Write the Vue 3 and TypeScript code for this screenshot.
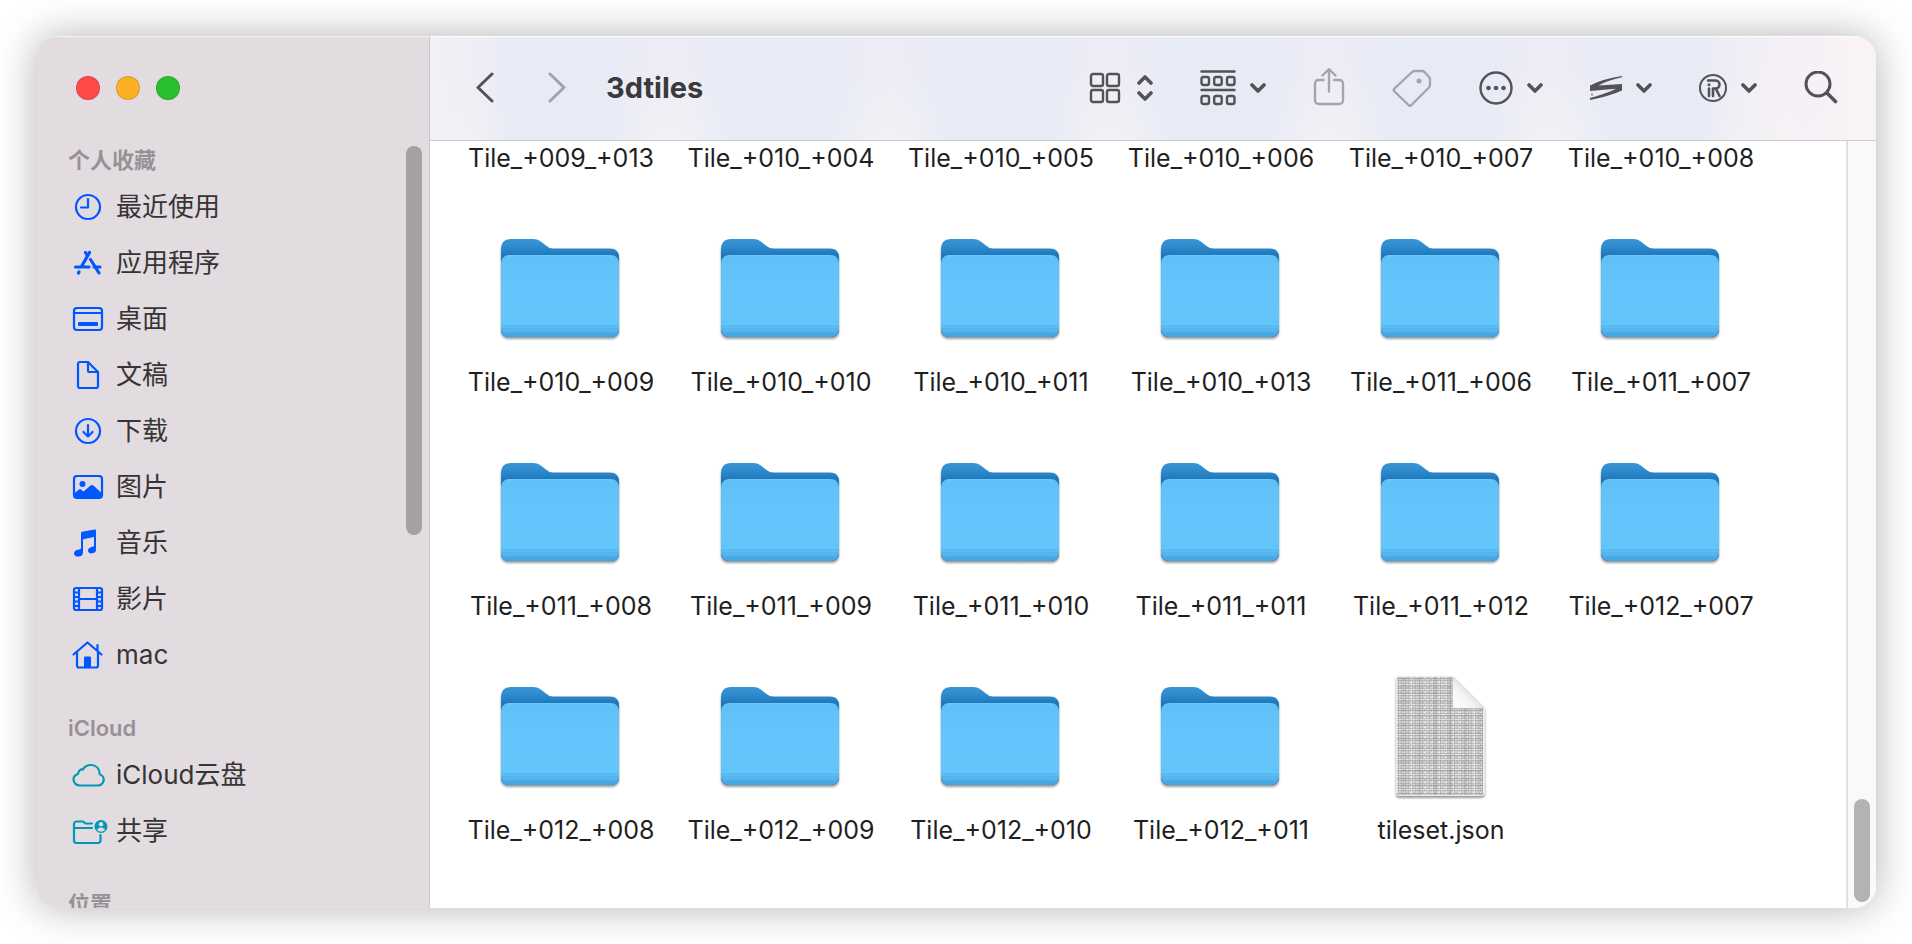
<script setup lang="ts">
interface Place { name: string; icon: string }
interface Section { title: string; tone: string; places: Place[] }
interface Entry { name: string; kind: 'folder' | 'json' }

const sections: Section[] = [
  {
    title: '个人收藏',
    tone: 'blue',
    places: [
      { name: '最近使用', icon: 'clock' },
      { name: '应用程序', icon: 'apps' },
      { name: '桌面', icon: 'desktop' },
      { name: '文稿', icon: 'document' },
      { name: '下载', icon: 'download' },
      { name: '图片', icon: 'picture' },
      { name: '音乐', icon: 'music' },
      { name: '影片', icon: 'film' },
      { name: 'mac', icon: 'home' },
    ],
  },
  {
    title: 'iCloud',
    tone: 'teal',
    places: [
      { name: 'iCloud云盘', icon: 'cloud' },
      { name: '共享', icon: 'shared' },
    ],
  },
  { title: '位置', tone: 'blue', places: [] },
]

const tiles: string[] = [
  '009_+013', '010_+004', '010_+005', '010_+006', '010_+007', '010_+008',
  '010_+009', '010_+010', '010_+011', '010_+013', '011_+006', '011_+007',
  '011_+008', '011_+009', '011_+010', '011_+011', '011_+012', '012_+007',
  '012_+008', '012_+009', '012_+010', '012_+011',
]

const entries: Entry[] = [
  ...tiles.map((t): Entry => ({ name: `Tile_+${t}`, kind: 'folder' })),
  { name: 'tileset.json', kind: 'json' },
]
</script>

<template>
  <div class="desktop">
    <svg class="defs" aria-hidden="true">
      <defs>
        <linearGradient id="folder-back" x1="0" y1="0" x2="0" y2="1">
          <stop offset="0" stop-color="#3a97d4" />
          <stop offset="0.1" stop-color="#2b86c8" />
          <stop offset="0.18" stop-color="#1b74bc" />
          <stop offset="1" stop-color="#1b74bc" />
        </linearGradient>
        <linearGradient id="folder-front" x1="0" y1="0" x2="0" y2="1">
          <stop offset="0" stop-color="#6fcbfb" />
          <stop offset="0.03" stop-color="#5fc1f7" />
          <stop offset="0.3" stop-color="#62c4fa" />
          <stop offset="0.85" stop-color="#64c5fb" />
          <stop offset="0.865" stop-color="#54b5ee" />
          <stop offset="0.88" stop-color="#5fc0f7" />
          <stop offset="0.9" stop-color="#50b1eb" />
          <stop offset="0.92" stop-color="#57b8f0" />
          <stop offset="0.95" stop-color="#48a9e4" />
          <stop offset="1" stop-color="#44a5df" />
        </linearGradient>
        <linearGradient id="page-curl" x1="0" y1="1" x2="1" y2="0">
          <stop offset="0" stop-color="#ffffff" />
          <stop offset="0.35" stop-color="#f4f4f4" />
          <stop offset="0.55" stop-color="#dcdcdc" />
        </linearGradient>
        <pattern id="page-print" width="7" height="5" patternUnits="userSpaceOnUse">
          <path d="M0 .5h7M0 2.5h7M0 4h5" stroke="#777" stroke-opacity=".55" stroke-dasharray="1.4 .7" />
          <path d="M1 0v5M3.5 0v5M5.5 1v3" stroke="#666" stroke-opacity=".3" stroke-width=".8" />
        </pattern>
        <pattern id="page-weave" width="31" height="23" patternUnits="userSpaceOnUse">
          <path d="M4 0v23M19 0v23" stroke="#fff" stroke-opacity=".3" />
          <path d="M11 0v23M27 0v23" stroke="#555" stroke-opacity=".12" stroke-width="3" />
          <path d="M0 6h31M0 14h31M0 20h31" stroke="#555" stroke-opacity=".25" />
        </pattern>
      </defs>
    </svg>

    <div class="window">
      <aside class="sidebar">
        <div class="lights">
          <button class="light close" aria-label="关闭"></button>
          <button class="light minimize" aria-label="最小化"></button>
          <button class="light zoom" aria-label="缩放"></button>
        </div>
        <nav class="places">
          <section v-for="s in sections" :key="s.title" class="section" :class="s.tone">
            <h2>{{ s.title }}</h2>
            <ul v-if="s.places.length">
              <li v-for="p in s.places" :key="p.name">
                <a href="#" class="place">
                  <svg class="place-icon" viewBox="0 0 36 32" aria-hidden="true">
                    <g v-if="p.icon === 'clock'" class="line">
                      <circle cx="16" cy="16" r="12" />
                      <path d="M16 8v8.500H9" />
                    </g>
                    <g v-else-if="p.icon === 'apps'" class="line thick">
                      <path d="M17.500 5.500 9.500 19.500M13.500 5.500l1.500 2.500M3.500 20H17M18.500 12.500 27 26M22 20h6M7 25l-.500 1" />
                    </g>
                    <g v-else-if="p.icon === 'desktop'">
                      <rect class="line" x="2" y="5" width="28" height="22" rx="3" />
                      <path class="line" d="M2 10h28" />
                      <rect class="solid" x="6" y="19" width="20" height="4" rx="1" />
                    </g>
                    <g v-else-if="p.icon === 'document'" class="line">
                      <path d="M8 3h8l10 10v14a2 2 0 0 1-2 2H8a2 2 0 0 1-2-2V5a2 2 0 0 1 2-2Z" />
                      <path d="M16 3v8.500a1.500 1.500 0 0 0 1.500 1.500H26" />
                    </g>
                    <g v-else-if="p.icon === 'download'" class="line">
                      <circle cx="16" cy="16" r="12" />
                      <path d="M16 10v11M11.500 17l4.500 4.500 4.500-4.500" />
                    </g>
                    <g v-else-if="p.icon === 'picture'">
                      <rect class="line" x="2" y="5" width="28" height="22" rx="3" />
                      <circle class="solid" cx="10.500" cy="13" r="3" />
                      <path class="solid" d="M2 22.500 7 18.500q1-.8 2 0l2.500 2 7-6q1.500-1.200 3 0L30 22.500V25a2 2 0 0 1-2 2H4a2 2 0 0 1-2-2Z" />
                    </g>
                    <g v-else-if="p.icon === 'music'" class="solid">
                      <path d="M9 6.200Q9 5 10.200 4.700L22.600 2.500Q24 2.300 24 3.700V22a4 4 0 0 1-3.500 4.300c-2.500.5-4.500-.6-4.500-2.800 0-2 1.500-3.200 3.500-3.600l1.800-.4q.700-.2.700-1V10L11 12.200V25a4.300 4.300 0 0 1-3.700 4.500C4.500 30 2 28.700 2 26.500s1.700-3.400 3.800-3.800l2.200-.5q1-.2 1-1.200Z" />
                    </g>
                    <g v-else-if="p.icon === 'film'" class="line">
                      <rect x="2" y="5" width="28" height="22" rx="2" />
                      <path d="M7 5v22M25 5v22M7 16h18" />
                      <path d="M2 9.500h5M2 14h5M2 18.500h5M2 23h5M25 9.500h5M25 14h5M25 18.500h5M25 23h5" />
                    </g>
                    <g v-else-if="p.icon === 'home'">
                      <path class="line" d="M1.500 15.500 15.500 3.500 29.500 15.500M5 13v13.500a2 2 0 0 0 2 2H24a2 2 0 0 0 2-2V13M25.500 6v6" />
                      <path class="solid" d="M12 18.500q0-1 1-1h5q1 0 1 1V28h-7Z" />
                    </g>
                    <path v-else-if="p.icon === 'cloud'" class="line" d="M8 26.500h17.500a5.800 5.800 0 0 0 2.200-11.300C27.500 9.500 24 6 18.800 6c-3.500 0-6.300 1.500-7.800 4.500-3-.3-4.700 1.500-5 4.500-2.800.8-4.500 2.800-4.500 5.500 0 3.500 3 6 6.500 6Z" />
                    <g v-else>
                      <path class="line" d="M2 13h18M20 8.500H13.500l-2.500-2H4.500A2.500 2.500 0 0 0 2 9v16.500a2.500 2.500 0 0 0 2.500 2.500H26a2.500 2.500 0 0 0 2.500-2.500V20" />
                      <circle class="solid" cx="29" cy="11.500" r="6.500" />
                      <circle class="cut" cx="29" cy="9.300" r="2.200" />
                      <path class="cut" d="M25 15.300q1-2.800 4-2.800t4 2.800q-4 2.700-8 0Z" />
                    </g>
                  </svg>
                  <span>{{ p.name }}</span>
                </a>
              </li>
            </ul>
          </section>
        </nav>
        <div class="thumb side-thumb"></div>
      </aside>

      <main class="main">
        <header class="toolbar">
          <button class="tool back" aria-label="返回">
            <svg width="20" height="32" viewBox="0 0 20 32"><path class="ink s3" d="M17 2 3 15.500 17 29" /></svg>
          </button>
          <button class="tool forward" aria-label="前进">
            <svg width="20" height="32" viewBox="0 0 20 32"><path class="ink s3" d="M3 2 17 15.500 3 29" /></svg>
          </button>
          <h1>3dtiles</h1>
          <div class="tools">
            <button class="tool wide" aria-label="显示方式">
              <svg width="32" height="36" viewBox="0 0 32 36">
                <g class="ink s2">
                  <rect x="2" y="4" width="12" height="12" rx="2" /><rect x="18" y="4" width="12" height="12" rx="2" />
                  <rect x="2" y="20" width="12" height="12" rx="2" /><rect x="18" y="20" width="12" height="12" rx="2" />
                </g>
              </svg>
              <svg width="16" height="36" viewBox="0 0 16 36"><path class="ink s4" d="M2 13 8 7l6 6M2 23l6 6 6-6" /></svg>
            </button>
            <button class="tool" aria-label="分组">
              <svg width="36" height="36" viewBox="0 0 36 36">
                <g class="ink s2">
                  <path d="M1.500 1.500h33M1.500 20h33" />
                  <rect x="1.500" y="7" width="7.500" height="8" rx="2" /><rect x="14.200" y="7" width="7.500" height="8" rx="2" /><rect x="27" y="7" width="7.500" height="8" rx="2" />
                  <rect x="1.500" y="26" width="7.500" height="8" rx="2" /><rect x="14.200" y="26" width="7.500" height="8" rx="2" /><rect x="27" y="26" width="7.500" height="8" rx="2" />
                </g>
              </svg>
              <svg width="16" height="12" viewBox="0 0 16 12"><path class="ink s4" d="m2 3 6 6 6-6" /></svg>
            </button>
            <button class="tool dim" aria-label="共享">
              <svg width="32" height="40" viewBox="0 0 32 40">
                <path class="ink s2" d="M10.500 12H5.500A3.500 3.500 0 0 0 2 15.500v17A3.500 3.500 0 0 0 5.500 36h21a3.500 3.500 0 0 0 3.500-3.500v-17a3.500 3.500 0 0 0-3.500-3.500H21M16 23.500V2M9.500 7.500 16 1.200l6.500 6.300" />
              </svg>
            </button>
            <button class="tool dim" aria-label="标签">
              <svg width="40" height="40" viewBox="0 0 40 40">
                <path class="ink s2" d="m2.500 20.500 17-16A5 5 0 0 1 23 3h7q1.500 0 2.500 1l4.500 5q1 1 1 2.500v5a5 5 0 0 1-1.500 3.500L19.500 37q-1.500 1.500-3 0L2.500 23.500q-1.500-1.500 0-3Z" />
                <circle class="dot" cx="27" cy="13" r="2.500" />
              </svg>
            </button>
            <button class="tool" aria-label="更多">
              <svg width="34" height="34" viewBox="0 0 34 34">
                <circle class="ink s2" cx="17" cy="17" r="15.500" />
                <g class="dot"><circle cx="9.500" cy="17" r="2.300" /><circle cx="17" cy="17" r="2.300" /><circle cx="24.500" cy="17" r="2.300" /></g>
              </svg>
              <svg width="16" height="12" viewBox="0 0 16 12"><path class="ink s4" d="m2 3 6 6 6-6" /></svg>
            </button>
            <button class="tool" aria-label="服务">
              <svg width="32" height="24" viewBox="0 0 32 24">
                <path class="dot" d="M32 0v1.300Q17 4.500 8.500 9.500L32 8v6.500Q20 20 0 24v-2Q17 17.500 26 12.800L0 15V9.500Q12 3 32 0Z" />
                <path class="dot" opacity="0.4" d="M1 17h2v3H1Z" />
              </svg>
              <svg width="16" height="12" viewBox="0 0 16 12"><path class="ink s4" d="m2 3 6 6 6-6" /></svg>
            </button>
            <button class="tool" aria-label="扩展">
              <svg width="28" height="28" viewBox="0 0 28 28">
                <circle class="ink ring" cx="14" cy="14" r="13" />
                <path class="ink mark" d="M9 6.500h7.500a4 4 0 0 1 0 8h-2.500v7.500M17 15l3.500 7M10 14.500v7.500" />
                <circle class="dot" cx="10" cy="10.800" r="1.500" />
              </svg>
              <svg width="16" height="12" viewBox="0 0 16 12"><path class="ink s4" d="m2 3 6 6 6-6" /></svg>
            </button>
            <button class="tool" aria-label="搜索">
              <svg width="34" height="34" viewBox="0 0 34 34"><circle class="ink s3" cx="14" cy="13" r="12" /><path class="ink s4" d="m23 22 8.500 8.500" /></svg>
            </button>
          </div>
        </header>

        <div class="body">
          <div class="files">
            <div v-for="e in entries" :key="e.name" class="file">
              <svg v-if="e.kind === 'folder'" class="file-icon" viewBox="0 0 128 128" aria-hidden="true">
                <path d="M4 25q0-11 10-11h23q4 0 7.500 3l5 4q3 2.500 7 2.500H113q9 0 9 9V104q0 8-8 8H12q-8 0-8-8Z" fill="url(#folder-back)" />
                <path d="M4 39q0-9 9-9h100q9 0 9 9v64q0 9-9 9H13q-9 0-9-9Z" fill="url(#folder-front)" />
              </svg>
              <svg v-else class="file-icon" viewBox="0 0 128 128" aria-hidden="true">
                <path d="M19 6q0-3 3-3h54l32 32v84q0 4-4 4H22q-3 0-3-3Z" fill="#ebebeb" />
                <path d="M20 4h56v31h30v87H20Z" fill="url(#page-print)" />
                <path d="M20 4h56v31h30v87H20Z" fill="url(#page-weave)" />
                <path d="M76 3v28q0 4 4 4h28Z" fill="url(#page-curl)" />
              </svg>
              <span>{{ e.name }}</span>
            </div>
          </div>
          <div class="track"><div class="thumb"></div></div>
        </div>
      </main>
    </div>
  </div>
</template>

<style>
body {
  margin: 0;
  background: #fff;
}
</style>

<style scoped>
.desktop {
  box-sizing: border-box;
  height: 100vh;
  padding: 36px;
  overflow: hidden;
  font-family: Inter, "Noto Sans CJK SC", sans-serif;
}
.defs {
  position: absolute;
  width: 0;
  height: 0;
}
.window {
  display: flex;
  height: 100%;
  border-radius: 22px;
  overflow: hidden;
  background: #fff;
  box-shadow: 0 0 40px rgba(0, 0, 0, 0.3);
}
button {
  padding: 0;
  border: 0;
  background: none;
}

/* Sidebar */
.sidebar {
  position: relative;
  box-sizing: border-box;
  flex: 0 0 394px;
  display: flex;
  flex-direction: column;
  overflow: hidden;
  background: #e2dce0;
  border-right: 1px solid #cfc9cd;
  box-shadow: inset 0 2px 1px -1px #f6f3f5;
}
.lights {
  display: flex;
  gap: 16px;
  padding: 40px 40px 41px;
}
.light {
  width: 24px;
  height: 24px;
  border-radius: 50%;
  border: 1px solid rgba(0, 0, 0, 0.14);
}
.close { background: #ff4a48; }
.minimize { background: #fdb026; }
.zoom { background: #2ac131; }
.places {
  flex: 1;
  min-height: 0;
  overflow: hidden;
}
.section {
  margin-bottom: 26px;
}
h2 {
  margin: 0;
  padding-left: 32px;
  font-size: 22px;
  line-height: 38px;
  font-weight: 600;
  color: #979196;
}
ul {
  margin: 0;
  padding: 0;
  list-style: none;
}
.place {
  display: flex;
  align-items: center;
  gap: 8px;
  height: 56px;
  padding-left: 36px;
  font-size: 26px;
  line-height: 32px;
  color: #363435;
  text-decoration: none;
}
.place-icon {
  width: 36px;
  height: 32px;
}
.blue .place-icon { color: #0057ff; }
.teal .place-icon { color: #0098b3; }
.line {
  fill: none;
  stroke: currentColor;
  stroke-width: 2.2px;
  stroke-linecap: round;
  stroke-linejoin: round;
}
.thick { stroke-width: 3.2px; }
.solid { fill: currentColor; }
.cut { fill: #e2dce0; }
.thumb {
  width: 16px;
  border-radius: 8px;
  background: #b3b3b3;
}
.side-thumb {
  position: absolute;
  top: 110px;
  right: 7px;
  height: 389px;
  background: #a5a0a3;
}

/* Toolbar */
.main {
  flex: 1;
  min-width: 0;
  display: flex;
  flex-direction: column;
}
.toolbar {
  box-sizing: border-box;
  flex: 0 0 105px;
  display: flex;
  align-items: center;
  padding: 0 38px 0 45px;
  border-bottom: 1px solid #cbcacd;
  box-shadow: inset 0 2px 1px -1px #fff;
  background:
    linear-gradient(90deg, #f3f0f5, rgba(243, 240, 245, 0) 80px),
    linear-gradient(270deg, #f9f2f6 30px, rgba(247, 242, 246, 0) 190px),
    radial-gradient(60px 75px at 50% 100%, #f0f1f5 20%, rgba(240, 241, 245, 0)) 130px 0 / 220px 100%,
    repeating-linear-gradient(90deg, #edecf6 0, #edecf6 30px, #e6ebf6 95px, #e6ebf6 165px, #edecf6 220px);
}
.tool {
  display: flex;
  align-items: center;
  color: #545256;
}
.tool svg {
  display: block;
}
.forward {
  margin-left: 52px;
  color: #a3a1ab;
}
.dim { color: #a5a3ab; }
h1 {
  margin: 0 0 0 39px;
  font-size: 29px;
  line-height: 36px;
  font-weight: 700;
  color: #3a393b;
}
.tools {
  flex: 1;
  display: flex;
  align-items: center;
  justify-content: flex-end;
  gap: 47px;
}
.tools .tool { gap: 14px; }
.tools .wide { gap: 16px; }
.ink {
  fill: none;
  stroke: currentColor;
  stroke-linecap: round;
  stroke-linejoin: round;
}
.ring { stroke-width: 2px; }
.s2 { stroke-width: 2.4px; }
.s3 { stroke-width: 3px; }
.s4 { stroke-width: 3.6px; }
.mark { stroke-width: 2.6px; }
.dot { fill: currentColor; }

/* Files */
.body {
  flex: 1;
  min-height: 0;
  display: flex;
}
.files {
  flex: 1;
  min-width: 0;
  display: grid;
  grid-template-columns: repeat(auto-fill, 220px);
  grid-auto-rows: 224px;
  align-content: end;
  padding: 0 20px 11px 21px;
  overflow: hidden;
}
.file {
  display: flex;
  flex-direction: column;
  align-items: center;
  gap: 15px;
  font-size: 25px;
  line-height: 28px;
  color: #1f1f1f;
}
.file-icon {
  width: 128px;
  height: 128px;
  filter: drop-shadow(0 2px 1px rgba(0, 0, 0, 0.4));
}
.track {
  flex: 0 0 22px;
  display: flex;
  flex-direction: column;
  justify-content: flex-end;
  padding: 0 0 6px 6px;
  border-left: 2px solid #e1e1e1;
  background: #f9f9f9;
}
.track .thumb {
  height: 103px;
}
</style>
